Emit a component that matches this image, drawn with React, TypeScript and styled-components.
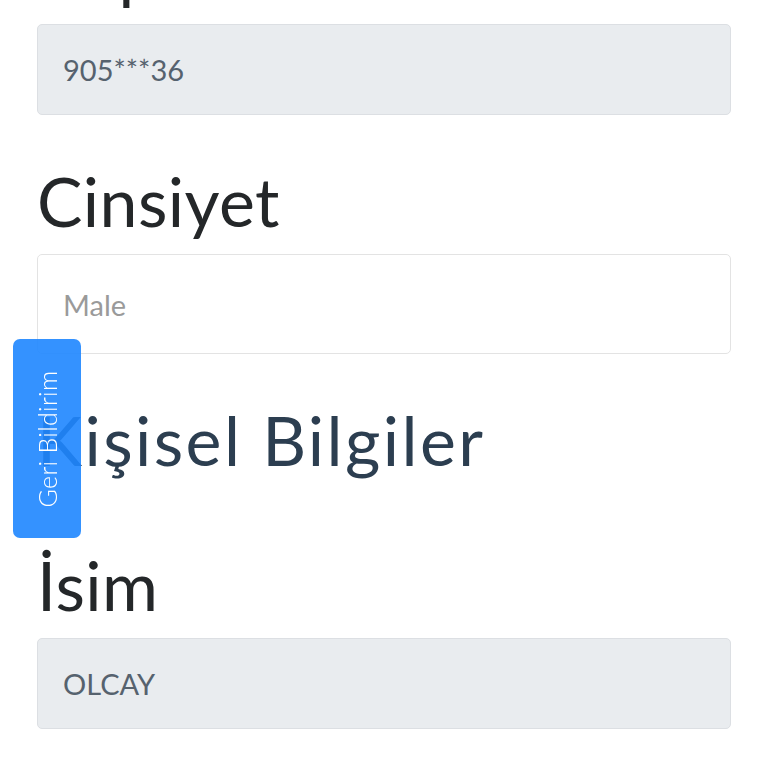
import React from 'react';
import styled, {createGlobalStyle} from 'styled-components';

const GlobalStyle = createGlobalStyle`
  html, body {
    margin: 0;
    padding: 0;
    background: #fff;
    overflow: hidden;
  }
  body {
    font-family: Lato, "Noto Sans", sans-serif;
  }
`

interface FieldItem {
    label: string;
    value: string;
    kind: 'disabled' | 'select';
}

const App = () => {
    const contact: FieldItem[] = [
        {label: 'Cep Telefonu', value: '905***36', kind: 'disabled'},
        {label: 'Cinsiyet', value: 'Male', kind: 'select'},
    ]

    const personal: FieldItem[] = [
        {label: 'İsim', value: 'OLCAY', kind: 'disabled'},
    ]

    const renderField = (item: FieldItem) => (
        <Field key={item.label}>
            <Label>{item.label}</Label>
            <Control kind={item.kind}>
                <ControlText kind={item.kind}>{item.value}</ControlText>
            </Control>
        </Field>
    )

    return (
        <>
            <GlobalStyle/>
            <Page>
                <Form>
                    {contact.map(renderField)}
                    <Section>Kişisel Bilgiler</Section>
                    {personal.map(renderField)}
                </Form>
            </Page>
            <FeedbackTab>
                <FeedbackText>Geri Bildirim</FeedbackText>
            </FeedbackTab>
        </>
    );
};

const Page = styled.div`
  height: 768px;
  overflow: hidden;
`

// page is scrolled: the first label sits above the viewport
const Form = styled.div`
  display: flex;
  flex-direction: column;
  padding: 0 37px;
  margin-top: -71px;
`

const Field = styled.div`
  display: flex;
  flex-direction: column;
  margin-bottom: 45px;
`

const Label = styled.label`
  font-size: 68px;
  line-height: 1.2;
  font-weight: 400;
  letter-spacing: 0.4px;
  color: #242729;
  margin-bottom: 13px;
  white-space: nowrap;
`

const Section = styled.h3`
  margin: 0 0 63px;
  font-size: 68px;
  line-height: 1.2;
  font-weight: 400;
  letter-spacing: 2.4px;
  color: #2c3e50;
`

interface ControlProps {
    kind: 'disabled' | 'select';
}

const Control = styled.div<ControlProps>`
  display: flex;
  align-items: center;
  box-sizing: border-box;
  height: ${(p) => p.kind === 'select' ? '100px' : '91px'};
  padding: 0 25px;
  border: 1px solid ${(p) => p.kind === 'select' ? '#e3e3e3' : '#dcdfe3'};
  border-radius: 5px;
  background-color: ${(p) => p.kind === 'select' ? '#fff' : '#e9ecef'};
`

const ControlText = styled.span<ControlProps>`
  font-size: 29px;
  color: ${(p) => p.kind === 'select' ? '#9a9a9a' : '#56626e'};
`

const FeedbackTab = styled.div`
  position: fixed;
  left: 13px;
  top: 339px;
  width: 68px;
  height: 199px;
  border-radius: 7px;
  background-color: rgba(30, 134, 255, 0.9);
  display: flex;
  align-items: center;
  justify-content: center;
`

const FeedbackText = styled.span`
  transform: rotate(-90deg);
  white-space: nowrap;
  color: #fff;
  font-size: 25px;
  font-weight: 300;
  letter-spacing: 0.3px;
`

export default App;
